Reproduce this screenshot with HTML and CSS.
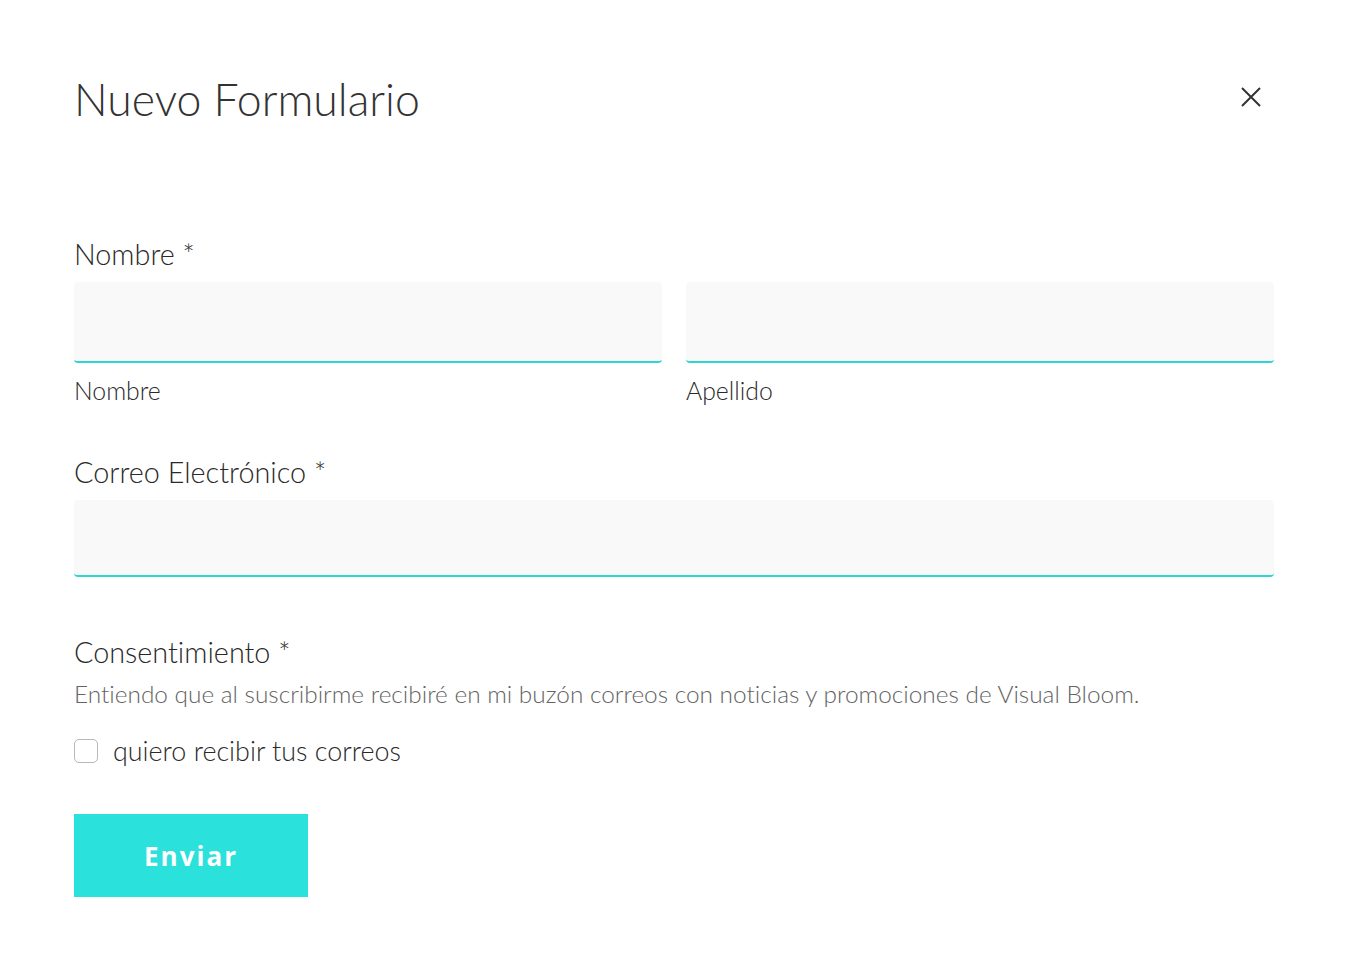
FILE: index.html
```html
<!DOCTYPE html>
<html lang="es">
<head>
<meta charset="utf-8">
<title>Nuevo Formulario</title>
<link rel="stylesheet" href="styles.css">
</head>
<body>
<div class="modal">
  <header class="modal-header">
    <h1 class="title">Nuevo Formulario</h1>
    <button class="close" type="button" aria-label="Cerrar">
      <svg width="22" height="22" viewBox="0 0 22 22"><path d="M2 2 L20 20 M20 2 L2 20" stroke="#333" stroke-width="2" fill="none"/></svg>
    </button>
  </header>

  <form class="form">
    <div class="field field-name">
      <div class="label">Nombre *</div>
      <div class="row">
        <div class="col">
          <div class="input input-tall"></div>
          <div class="sublabel">Nombre</div>
        </div>
        <div class="col">
          <div class="input input-tall"></div>
          <div class="sublabel">Apellido</div>
        </div>
      </div>
    </div>

    <div class="field field-email">
      <div class="label">Correo Electrónico *</div>
      <div class="input input-email"></div>
    </div>

    <div class="field field-consent">
      <div class="label">Consentimiento *</div>
      <p class="desc">Entiendo que al suscribirme recibiré en mi buzón correos con noticias y promociones de Visual Bloom.</p>
      <label class="check">
        <span class="box"></span>
        <span class="check-text">quiero recibir tus correos</span>
      </label>
    </div>

    <button type="button" class="submit">Enviar</button>
  </form>
</div>
</body>
</html>
```

FILE: styles.css
```css
html, body {
  margin: 0;
  padding: 0;
  background: #ffffff;
}

body {
  font-family: Lato, "Liberation Sans", sans-serif;
  color: #333333;
  font-variant-ligatures: none;
}

.modal {
  padding: 73px 74px 0 74px;
}

.modal-header {
  display: flex;
  justify-content: space-between;
  align-items: flex-start;
}

.title {
  margin: 0;
  font-size: 44.6px;
  line-height: 52px;
  font-weight: 300;
  color: #333333;
}

.close {
  margin: 13px 12px 0 0;
  padding: 0;
  border: 0;
  background: none;
  width: 22px;
  height: 22px;
  cursor: pointer;
  display: block;
}

.close svg {
  display: block;
}

.form {
  display: flex;
  flex-direction: column;
}

.field-name {
  margin-top: 111px;
}

.label {
  font-size: 28.8px;
  line-height: 32px;
  font-weight: 300;
  color: #2a2a2a;
  padding-top: 2px;
  margin-bottom: 12px;
}

.row {
  display: flex;
  gap: 24px;
}

.col {
  flex: 1;
}

.input {
  background: #f9f9f9;
  border-radius: 4px;
  border-bottom: 2px solid #2cd6d2;
  box-sizing: border-box;
}

.input-tall {
  height: 81px;
}

.input-email {
  height: 77px;
}

.sublabel {
  margin-top: 14px;
  font-size: 24.8px;
  line-height: 28px;
  font-weight: 300;
  color: #2a2a2a;
}

.field-email {
  margin-top: 49px;
}

.field-consent {
  margin-top: 57px;
}

.field-consent .label {
  margin-bottom: 11px;
}

.desc {
  margin: 0;
  font-size: 24.4px;
  line-height: 30px;
  font-weight: 300;
  color: #636363;
}

.check {
  display: flex;
  align-items: center;
  gap: 15px;
  margin-top: 27px;
}

.box {
  width: 24px;
  height: 24px;
  box-sizing: border-box;
  border: 1.5px solid #b8b8b8;
  border-radius: 5px;
  background: #fff;
}

.check-text {
  font-size: 26.9px;
  line-height: 30px;
  font-weight: 300;
  color: #2a2a2a;
}

.submit {
  margin-top: 48px;
  width: 234px;
  height: 83px;
  border: 0;
  border-radius: 0;
  background: #2ae1dc;
  color: #ffffff;
  font-family: "Open Sans", Lato, sans-serif;
  font-weight: 700;
  font-size: 26px;
  letter-spacing: 2px;
  padding: 0;
  cursor: pointer;
}
```
